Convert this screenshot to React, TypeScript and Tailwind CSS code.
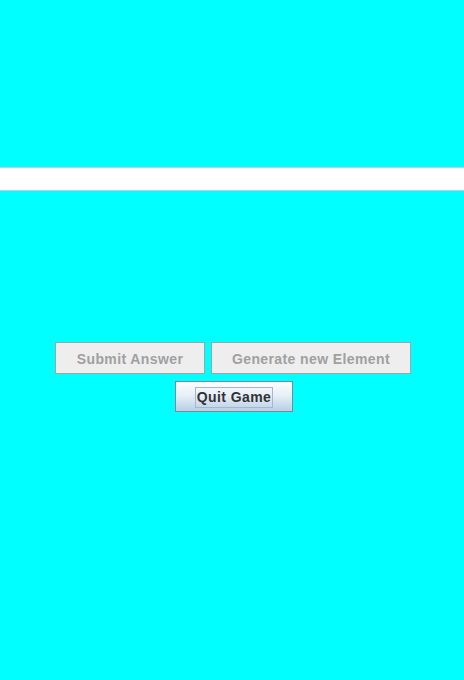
export default function App() {
  return (
    <div className="flex h-[680px] w-[464px] flex-col bg-[#00ffff] font-['Liberation_Sans',Arial,sans-serif]">
      <div className="h-[167px]" />
      <input
        type="text"
        className="h-[24px] w-full border-y border-[#b8cfe5] bg-white px-1 text-[13px] outline-none"
      />
      <div className="flex flex-1 flex-col items-center pt-[151px]">
        <div className="ml-[2px] flex gap-[6px]">
          <button
            disabled
            className="h-[32px] w-[150px] border border-[#a3a3a3] bg-[#eeeeee] pt-[2px] text-[14px] font-bold tracking-[0.4px] text-[#a0a0a0]"
          >
            Submit Answer
          </button>
          <button
            disabled
            className="h-[32px] w-[200px] border border-[#a3a3a3] bg-[#eeeeee] pt-[2px] text-[14px] font-bold tracking-[0.4px] text-[#a0a0a0]"
          >
            Generate new Element
          </button>
        </div>
        <button className="mt-[7px] ml-[4px] flex h-[31px] w-[118px] items-center justify-center border border-[#7a8a99] bg-gradient-to-b from-white via-[#e4edf6] to-[#b8cfe5] pt-[1px]">
          <span className="border border-[#a3b8cc] px-[1px] text-[14px] leading-[19px] font-bold tracking-[0.4px] text-[#333333]">
            Quit Game
          </span>
        </button>
      </div>
    </div>
  );
}
